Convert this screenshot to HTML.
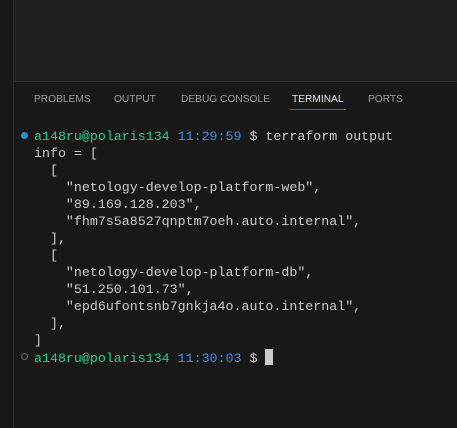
<html><head><style>
body{margin:0;width:457px;height:428px;background:#181818;position:relative;overflow:hidden;font-family:"Liberation Sans",sans-serif}
.top{position:absolute;left:14px;top:0;width:443px;height:81px;background:#1f1f1f;border-bottom:1px solid #2b2b2b}
.side{position:absolute;left:0;top:0;width:13px;height:428px;background:#181818;border-right:1px solid #2b2b2b}
.tab{position:absolute;top:94px;font-size:10.2px;color:#9d9d9d}
.t{position:absolute;left:34px;top:128px;font-family:"Liberation Mono",monospace;font-size:13.3px;line-height:17px;color:#cccccc;white-space:pre}
.g{color:#23d18b}.b{color:#3b8eea}
.cur{display:inline-block;width:8px;height:16px;background:#cccccc;vertical-align:-3px}
</style></head><body>
<div class="side"></div><div class="top"></div>
<div class="tab" style="left:34px">PROBLEMS</div>
<div class="tab" style="left:114px">OUTPUT</div>
<div class="tab" style="left:181px">DEBUG CONSOLE</div>
<div class="tab" style="left:292px;color:#e7e7e7">TERMINAL</div>
<div style="position:absolute;left:290px;top:109px;width:56px;height:1px;background:#0078d4"></div>
<div class="tab" style="left:368px">PORTS</div>
<div style="position:absolute;left:21px;top:132px;width:7px;height:7px;border-radius:50%;background:#2e8ec8"></div>
<div style="position:absolute;left:21px;top:353px;width:5px;height:5px;border-radius:50%;border:1px solid #6a6a6a"></div>
<div class="t"><span class="g">a148ru@polaris134</span> <span class="b">11:29:59</span> $ terraform output
info = [
  [
    "netology-develop-platform-web",
    "89.169.128.203",
    "fhm7s5a8527qnptm7oeh.auto.internal",
  ],
  [
    "netology-develop-platform-db",
    "51.250.101.73",
    "epd6ufontsnb7gnkja4o.auto.internal",
  ],
]
<span class="g">a148ru@polaris134</span> <span class="b">11:30:03</span> $ <span class="cur"></span></div>
</body></html>
